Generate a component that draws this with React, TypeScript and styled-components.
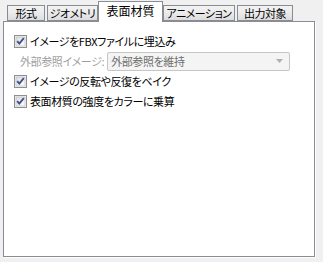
import React from "react";
import styled, { createGlobalStyle } from "styled-components";

const Global = createGlobalStyle`
  html, body { margin: 0; padding: 0; background: #f0f0f0; }
  body {
    font-family: "Noto Sans CJK JP", "Noto Sans", sans-serif;
    font-size: 11px;
    letter-spacing: -0.4px;
    font-feature-settings: "palt";
    color: #000;
  }
`;

const Frame = styled.div`
  width: 323px;
  height: 262px;
  box-sizing: border-box;
  padding: 1px 0 0 3px;
  display: flex;
  flex-direction: column;
`;

const TabBar = styled.div`
  display: flex;
  align-items: flex-end;
  height: 20px;
  padding-left: 4px;
  gap: 2px;
  position: relative;
  z-index: 1;
`;

const Tab = styled.div<{ $active?: boolean; $w: number }>`
  box-sizing: border-box;
  width: ${(p) => p.$w}px;
  height: ${(p) => (p.$active ? 21 : 16)}px;
  margin: ${(p) => (p.$active ? "0 -2px -1px -2px" : "0")};
  border: 1px solid #898c95;
  border-bottom: ${(p) => (p.$active ? "none" : "1px solid #898c95")};
  background: ${(p) =>
    p.$active ? "#ffffff" : "linear-gradient(#f3f3f3, #ebebeb 50%, #dcdcdc)"};
  display: flex;
  align-items: center;
  justify-content: center;
  font-size: ${(p) => (p.$active ? 12 : 11)}px;
  letter-spacing: ${(p) => (p.$active ? 0 : -0.5)}px;
  line-height: 1;
  white-space: nowrap;
  padding-bottom: ${(p) => (p.$active ? 3 : 0)}px;
`;

const Panel = styled.div`
  box-sizing: border-box;
  width: 312px;
  height: 236px;
  background: #fff;
  border: 1px solid #898c95;
  box-shadow: 1px 1px 0 #ffffff;
  padding: 9px 0 0 10px;
  display: flex;
  flex-direction: column;
`;

const Row = styled.div<{ $indent?: number }>`
  display: flex;
  align-items: center;
  height: 20px;
  padding-left: ${(p) => p.$indent ?? 0}px;
  white-space: nowrap;
`;

const Label = styled.span<{ $disabled?: boolean }>`
  color: ${(p) => (p.$disabled ? "#a0a0a0" : "#000")};
  margin-left: 3px;
  line-height: 1;
`;

const Combo = styled.div`
  box-sizing: border-box;
  margin-left: 3px;
  width: 183px;
  height: 19px;
  border: 1px solid #c6c6c6;
  border-radius: 2px;
  background: #f4f4f4;
  color: #6d6d6d;
  display: flex;
  align-items: center;
  justify-content: space-between;
  padding: 0 6px 0 3px;
`;

const Box = styled.span`
  width: 13px;
  height: 13px;
  display: inline-flex;
  flex: none;
`;

const Check = () => (
  <Box>
    <svg width="13" height="13" viewBox="0 0 13 13">
      <defs>
        <linearGradient id="cbg" x1="0" y1="0" x2="1" y2="1">
          <stop offset="0" stopColor="#dcdcdc" />
          <stop offset="1" stopColor="#ffffff" />
        </linearGradient>
      </defs>
      <rect x="0.5" y="0.5" width="12" height="12" fill="#f4f4f4" stroke="#8e8f8f" />
      <rect x="2" y="2" width="9" height="9" fill="url(#cbg)" stroke="#b6b6b6" strokeWidth="0.6" />
      <path d="M3.2 6.2 L5.3 8.6 L9.8 3.2" fill="none" stroke="#3c4f8f" strokeWidth="1.8" />
    </svg>
  </Box>
);

const Arrow = () => (
  <svg width="7" height="4" viewBox="0 0 7 4">
    <path d="M0 0 H7 L3.5 4 Z" fill="#b0b0b0" />
  </svg>
);

export default function App() {
  return (
    <>
      <Global />
      <Frame>
        <TabBar>
          <Tab $w={38}>形式</Tab>
          <Tab $w={51}>ジオメトリ</Tab>
          <Tab $active $w={65}>表面材質</Tab>
          <Tab $w={72}>アニメーション</Tab>
          <Tab $w={56}>出力対象</Tab>
        </TabBar>
        <Panel>
          <Row>
            <Check />
            <Label>イメージをFBXファイルに埋込み</Label>
          </Row>
          <Row $indent={3}>
            <Label $disabled>外部参照イメージ:</Label>
            <Combo>
              <span>外部参照を維持</span>
              <Arrow />
            </Combo>
          </Row>
          <Row>
            <Check />
            <Label>イメージの反転や反復をベイク</Label>
          </Row>
          <Row>
            <Check />
            <Label>表面材質の強度をカラーに乗算</Label>
          </Row>
        </Panel>
      </Frame>
    </>
  );
}
